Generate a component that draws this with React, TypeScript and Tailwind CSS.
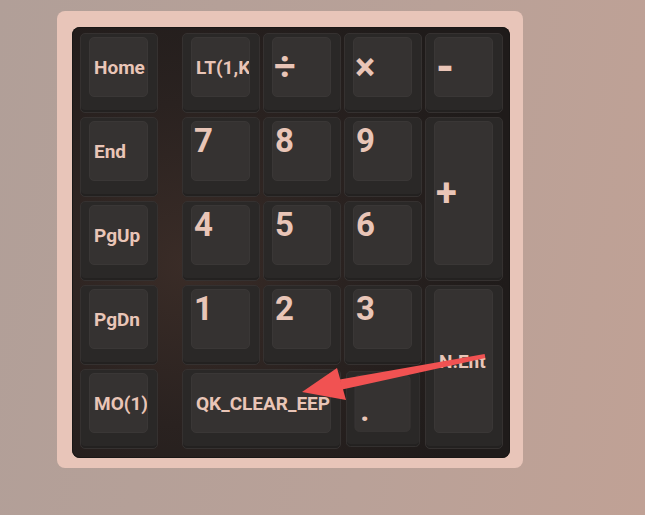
import React from "react";

const FONT = { fontFamily: "Roboto, 'Noto Sans', sans-serif" };

type KeyProps = {
  label: string;
  kind?: "text" | "digit" | "symbol" | "dot";
  className?: string;
  labelClass?: string;
};

function Key({ label, kind = "text", className = "", labelClass = "" }: KeyProps) {
  const inner =
    kind === "digit"
      ? "items-start pt-[2px] pl-[2px] text-[33px]"
      : kind === "dot"
      ? "items-start pt-[20px] pl-[5px] text-[33px]"
      : kind === "symbol"
      ? "items-center pl-[1px] text-[38px]"
      : "items-center pl-[4px] text-[19px]";

  return (
    <div
      className={`h-full w-full rounded-[5px] bg-[#2a2827] border border-[#353130] pt-[3px] pl-[8px] pr-[9px] pb-[15px] shadow-[inset_0_-2px_0_#232120] ${className}`}
    >
      <div
        className={`flex h-full w-full overflow-hidden rounded-[5px] border border-[#3a3736] bg-[#353231] font-bold leading-none whitespace-nowrap text-[#e9c5b7] ${inner} ${labelClass}`}
        style={FONT}
      >
        {label}
      </div>
    </div>
  );
}

export default function App() {
  const leftKeys = ["Home", "End", "PgUp", "PgDn", "MO(1)"];

  return (
    <div className="relative min-h-screen w-full bg-[linear-gradient(100deg,#b19f98_0%,#b9a198_60%,#c0a195_100%)] pt-[11px] pl-[57px]">
      {/* FRAME */}
      <div className="w-[466px] rounded-[8px] bg-[#e8c5b9] pt-[16px] pl-[15px] pr-[13px] pb-[10px]">
        {/* PLATE */}
        <div className="flex h-[431px] w-[438px] gap-[24px] rounded-[8px] bg-[radial-gradient(circle_at_26%_55%,#3a2c27_0%,#2a2220_40%,#1f1b1a_80%)] pt-[6px] pl-[8px] shadow-[inset_0_0_0_1px_#1a1716]">
          {/* LEFT COLUMN */}
          <div className="grid grid-cols-[78px] grid-rows-[repeat(5,80px)] gap-y-[4px]">
            {leftKeys.map((k) => (
              <Key key={k} label={k} />
            ))}
          </div>

          {/* NUMPAD */}
          <div className="grid grid-cols-[repeat(4,78px)] grid-rows-[repeat(5,80px)] gap-x-[3px] gap-y-[4px]">
            <Key label="LT(1,KC_P0)" />
            <Key label="÷" kind="symbol" />
            <Key label="×" kind="symbol" />
            <Key label="-" kind="symbol" labelClass="text-[46px]" />

            <Key label="7" kind="digit" />
            <Key label="8" kind="digit" />
            <Key label="9" kind="digit" />
            <Key label="+" kind="symbol" className="row-span-2" />

            <Key label="4" kind="digit" />
            <Key label="5" kind="digit" />
            <Key label="6" kind="digit" />

            <Key label="1" kind="digit" />
            <Key label="2" kind="digit" />
            <Key label="3" kind="digit" />
            <Key label="N.Ent" className="row-span-2" />

            <Key label="QK_CLEAR_EEPROM" className="col-span-2" />
            <Key label="." kind="dot" className="scale-[0.95] border-[#48423f]" />
          </div>
        </div>
      </div>

      {/* ANNOTATION ARROW */}
      <svg className="pointer-events-none absolute left-0 top-0" width="645" height="515">
        <polygon points="485.4,358 484.6,354 339.8,379.6 342.2,389.4" fill="#f15252" />
        <polygon points="302,392 337,368 346,400" fill="#f15252" />
      </svg>
    </div>
  );
}
